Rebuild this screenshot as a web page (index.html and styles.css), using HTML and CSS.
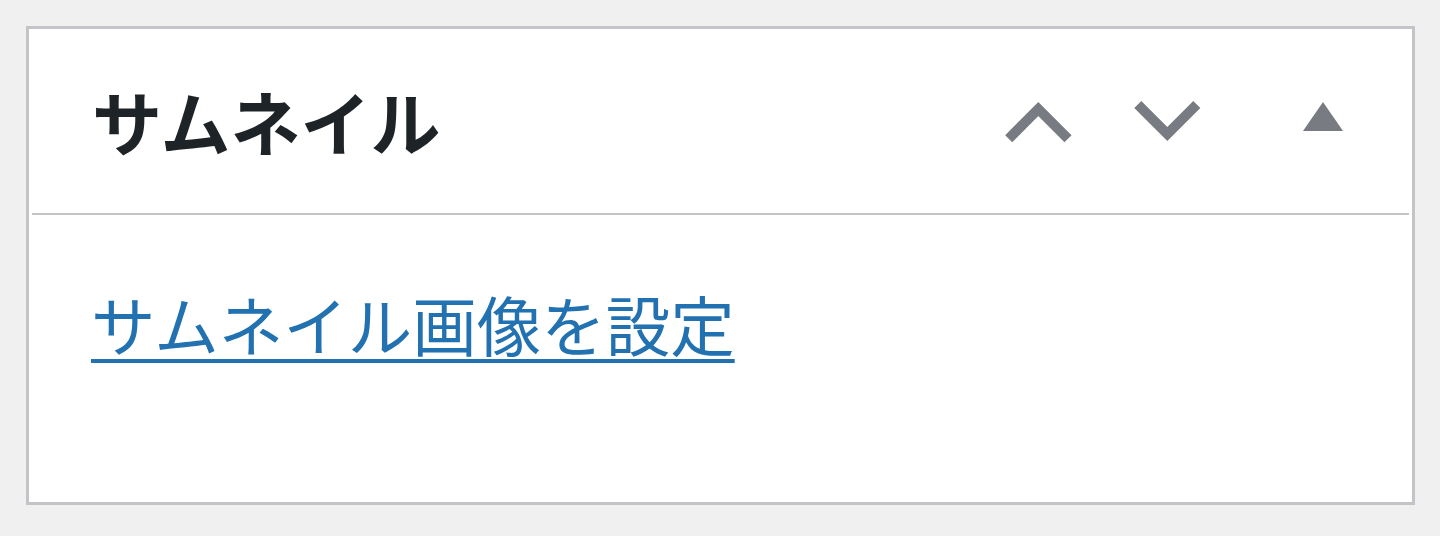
FILE: index.html
```html
<!DOCTYPE html>
<html lang="ja">
<head>
    <meta charset="UTF-8">
    <meta name="viewport" content="width=device-width, initial-scale=1.0">
    <title>サムネイル</title>
    <link rel="stylesheet" href="styles.css">
</head>
<body>
    <div class="postbox">
        <div class="postbox-header">
            <h2 class="hndle">サムネイル</h2>
            <div class="handle-actions">
                <button class="handle-btn" type="button" aria-label="上へ移動">
                    <svg width="80" height="50" viewBox="0 0 80 50"><polyline points="8.7,42.8 38.3,13 68,42.8" /></svg>
                </button>
                <button class="handle-btn" type="button" aria-label="下へ移動">
                    <svg width="80" height="50" viewBox="0 0 80 50"><polyline points="9.8,8.5 39.3,38 68.8,8.5" /></svg>
                </button>
                <button class="handle-btn toggle" type="button" aria-label="パネルを切り替え">
                    <svg width="46" height="50" viewBox="0 0 46 50"><polygon points="3,35 43,35 23,6" /></svg>
                </button>
            </div>
        </div>
        <div class="inside">
            <a href="#" class="set-thumbnail">サムネイル画像を設定</a>
        </div>
    </div>
</body>
</html>
```

FILE: styles.css
```css
body {
    margin: 0;
    padding: 26px 25px 31px 26px;
    background-color: #f0f0f1;
    font-family: "Noto Sans CJK JP", "Noto Sans", sans-serif;
}

.postbox {
    box-sizing: border-box;
    width: 1389px;
    height: 479px;
    border: 3px solid #c3c4c7;
    background-color: #fff;
}

.postbox-header {
    display: flex;
    align-items: center;
    justify-content: space-between;
    height: 184px;
    margin: 0 3px;
    padding: 0 63px 0 60px;
    border-bottom: 2px solid #c3c4c7;
}

.hndle {
    margin: 0;
    font-size: 70px;
    font-weight: 700;
    line-height: 1;
    color: #1d2327;
}

.handle-actions {
    display: flex;
    align-items: center;
}

.handle-btn {
    display: block;
    padding: 0;
    margin: 0 0 0 48px;
    border: none;
    background: none;
    cursor: pointer;
}

.handle-btn.toggle {
    margin-left: 92px;
}

.handle-btn svg {
    display: block;
}

.handle-btn polyline {
    fill: none;
    stroke: #787c82;
    stroke-width: 10;
    stroke-linejoin: miter;
}

.handle-btn polygon {
    fill: #787c82;
}

.inside {
    padding: 63px 62px 0;
}

.set-thumbnail {
    font-size: 64.5px;
    line-height: 1.4;
    color: #2271b1;
    text-decoration: underline;
    text-decoration-thickness: 4px;
    text-underline-offset: 8px;
}
```
